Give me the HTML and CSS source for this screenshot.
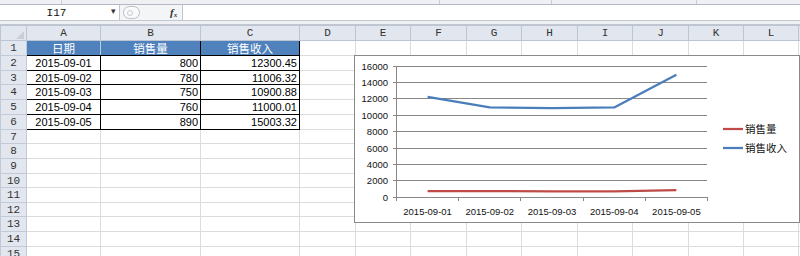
FILE: index.html
```html
<!DOCTYPE html>
<html lang="zh-CN">
<head>
    <meta charset="UTF-8">
    <title>销售数据</title>
    <link rel="stylesheet" href="styles.css">
</head>
<body>
    <div class="ribbon-edge">
        <span class="group" style="width: 62px"></span>
        <span class="group" style="width: 378px"></span>
        <span class="group" style="width: 112px"></span>
        <span class="group" style="width: 145px"></span>
    </div>

    <div class="formula-bar">
        <div class="name-box">
            <span class="cell-ref">I17</span>
            <span class="drop">&#9662;</span>
        </div>
        <div class="fx-tools">
            <span class="pill"><span class="dot"></span></span>
            <span class="fx">f<sub>x</sub></span>
        </div>
        <div class="formula-input"></div>
    </div>
    <div class="bar-gap"></div>

    <div class="sheet">
        <table class="grid">
            <colgroup>
                <col style="width: 26px">
                <col style="width: 74px">
                <col style="width: 100px">
                <col style="width: 99px">
                <col style="width: 56px">
                <col style="width: 55px">
                <col style="width: 56px">
                <col style="width: 55px">
                <col style="width: 56px">
                <col style="width: 55px">
                <col style="width: 56px">
                <col style="width: 55px">
                <col style="width: 55px">
                <col style="width: 40px">
            </colgroup>
            <thead>
                <tr>
                    <th class="corner"><span class="tri"></span></th>
                    <th>A</th><th>B</th><th>C</th><th>D</th><th>E</th><th>F</th>
                    <th>G</th><th>H</th><th>I</th><th>J</th><th>K</th><th>L</th><th></th>
                </tr>
            </thead>
            <tbody>
                <tr>
                    <th class="rh">1</th>
                    <td class="head first">日期</td>
                    <td class="head">销售量</td>
                    <td class="head">销售收入</td>
                    <td></td><td></td><td></td><td></td><td></td><td></td><td></td><td></td><td></td><td></td>
                </tr>
                <tr>
                    <th class="rh">2</th>
                    <td class="data date">2015-09-01</td>
                    <td class="data num">800</td>
                    <td class="data num">12300.45</td>
                    <td></td><td></td><td></td><td></td><td></td><td></td><td></td><td></td><td></td><td></td>
                </tr>
                <tr class="short">
                    <th class="rh">3</th>
                    <td class="data date">2015-09-02</td>
                    <td class="data num">780</td>
                    <td class="data num">11006.32</td>
                    <td></td><td></td><td></td><td></td><td></td><td></td><td></td><td></td><td></td><td></td>
                </tr>
                <tr>
                    <th class="rh">4</th>
                    <td class="data date">2015-09-03</td>
                    <td class="data num">750</td>
                    <td class="data num">10900.88</td>
                    <td></td><td></td><td></td><td></td><td></td><td></td><td></td><td></td><td></td><td></td>
                </tr>
                <tr>
                    <th class="rh">5</th>
                    <td class="data date">2015-09-04</td>
                    <td class="data num">760</td>
                    <td class="data num">11000.01</td>
                    <td></td><td></td><td></td><td></td><td></td><td></td><td></td><td></td><td></td><td></td>
                </tr>
                <tr>
                    <th class="rh">6</th>
                    <td class="data date">2015-09-05</td>
                    <td class="data num">890</td>
                    <td class="data num">15003.32</td>
                    <td></td><td></td><td></td><td></td><td></td><td></td><td></td><td></td><td></td><td></td>
                </tr>
            </tbody>
        </table>

        <div class="chart">
            <svg width="444" height="166" viewBox="355 56 444 166">
                <g class="gridlines">
                    <line x1="393" y1="66.5" x2="707" y2="66.5"/>
                    <line x1="393" y1="82.5" x2="707" y2="82.5"/>
                    <line x1="393" y1="98.5" x2="707" y2="98.5"/>
                    <line x1="393" y1="115.5" x2="707" y2="115.5"/>
                    <line x1="393" y1="131.5" x2="707" y2="131.5"/>
                    <line x1="393" y1="148.5" x2="707" y2="148.5"/>
                    <line x1="393" y1="164.5" x2="707" y2="164.5"/>
                    <line x1="393" y1="180.5" x2="707" y2="180.5"/>
                    <line x1="393" y1="197.5" x2="707" y2="197.5"/>
                    <line x1="396.5" y1="66" x2="396.5" y2="201"/>
                    <line x1="458.5" y1="197" x2="458.5" y2="201"/>
                    <line x1="520.5" y1="197" x2="520.5" y2="201"/>
                    <line x1="583.5" y1="197" x2="583.5" y2="201"/>
                    <line x1="645.5" y1="197" x2="645.5" y2="201"/>
                    <line x1="707.5" y1="197" x2="707.5" y2="201"/>
                </g>
                <g class="y-labels">
                    <text x="388" y="70">16000</text>
                    <text x="388" y="86">14000</text>
                    <text x="388" y="102">12000</text>
                    <text x="388" y="119">10000</text>
                    <text x="388" y="135">8000</text>
                    <text x="388" y="152">6000</text>
                    <text x="388" y="168">4000</text>
                    <text x="388" y="184">2000</text>
                    <text x="388" y="201">0</text>
                </g>
                <g class="x-labels">
                    <text x="427.6" y="215">2015-09-01</text>
                    <text x="489.8" y="215">2015-09-02</text>
                    <text x="552" y="215">2015-09-03</text>
                    <text x="614.2" y="215">2015-09-04</text>
                    <text x="676.4" y="215">2015-09-05</text>
                </g>
                <polyline class="series qty" points="427.6,191 489.8,191.1 552,191.4 614.2,191.3 676.4,190.2"/>
                <polyline class="series revenue" points="427.6,96.8 489.8,107.4 552,108.2 614.2,107.4 676.4,74.7"/>
                <g class="legend">
                    <line class="qty" x1="723" y1="129" x2="743" y2="129"/>
                    <text x="745" y="133">销售量</text>
                    <line class="revenue" x1="723" y1="148" x2="743" y2="148"/>
                    <text x="745" y="152">销售收入</text>
                </g>
            </svg>
        </div>
    </div>

    <script>
        // empty rows below the data
        const tbody = document.querySelector('.grid tbody');
        for (let r = 7; r <= 15; r++) {
            const tr = document.createElement('tr');
            if ([7, 10, 12].includes(r)) tr.className = 'short';
            tr.innerHTML = `<th class="rh">${r}</th>` + '<td></td>'.repeat(13);
            tbody.appendChild(tr);
        }
    </script>
</body>
</html>
```

FILE: styles.css
```css
* {
    box-sizing: border-box;
}
body {
    margin: 0;
    width: 800px;
    height: 256px;
    overflow: hidden;
    background: #fff;
    font-family: "Liberation Sans", "Noto Sans CJK SC", sans-serif;
}
.ribbon-edge {
    height: 5px;
    display: flex;
    background: #eef0f4;
    border-bottom: 1px solid #b3b9c3;
}
.ribbon-edge .group {
    border-right: 1px solid #c9ced6;
}
.formula-bar {
    height: 16px;
    display: flex;
    background: #fff;
    border-bottom: 1px solid #c2c7cf;
}
.name-box {
    width: 120px;
    display: flex;
    align-items: center;
    justify-content: center;
    position: relative;
    border-right: 1px solid #c2c7cf;
}
.cell-ref {
    font-family: "Liberation Mono", monospace;
    font-size: 11px;
    color: #111;
    margin-right: 6px;
}
.drop {
    position: absolute;
    right: 3px;
    top: 1px;
    font-size: 9px;
    color: #333;
}
.fx-tools {
    width: 62px;
    display: flex;
    align-items: center;
    padding-left: 3px;
    background: #f4f5f7;
}
.pill {
    width: 17px;
    height: 13px;
    border: 1px solid #b9bec6;
    border-radius: 7px;
    background: #fafafa;
    display: flex;
    align-items: center;
    padding-left: 3px;
}
.pill .dot {
    width: 6px;
    height: 6px;
    border: 1px solid #c7cbd2;
    border-radius: 50%;
}
.fx {
    margin-left: 30px;
    font-family: "Liberation Serif", serif;
    font-style: italic;
    font-weight: bold;
    font-size: 11px;
    color: #333;
}
.fx sub {
    font-size: 7px;
    vertical-align: -1px;
}
.formula-input {
    flex: 1;
    border-left: 1px solid #c2c7cf;
}
.bar-gap {
    height: 4px;
    background: #eef0f4;
    border-bottom: 1px solid #c2c7cf;
}
.sheet {
    position: relative;
}
.grid {
    table-layout: fixed;
    border-collapse: collapse;
    width: 838px;
}
.grid thead th {
    height: 12px;
    padding: 0;
    font-family: "Liberation Mono", monospace;
    font-weight: normal;
    font-size: 11px;
    line-height: 11px;
    color: #333;
    background: #e2e6ee;
    border: 1px solid #bcc5d3;
}
.grid thead th.corner {
    position: relative;
}
.tri {
    position: absolute;
    right: 2px;
    bottom: 1px;
    width: 0;
    height: 0;
    border-left: 8px solid transparent;
    border-bottom: 8px solid #c9ced8;
}
.grid tr {
    height: 15px;
}
.grid tr.short {
    height: 14px;
}
.grid td {
    padding: 0 2px;
    border: 1px solid #dcdcdc;
    font-size: 11px;
    line-height: 12px;
    white-space: nowrap;
    overflow: hidden;
}
.grid th.rh {
    padding: 0;
    font-family: "Liberation Mono", monospace;
    font-weight: normal;
    font-size: 11px;
    line-height: 12px;
    color: #333;
    background: #e2e6ee;
    border: 1px solid #c3cad7;
}
.grid td.head {
    background: #4f81bd;
    color: #fff;
    text-align: center;
    font-family: "Noto Sans CJK SC", sans-serif;
    font-size: 11.5px;
    border: 1px solid #000;
}
.grid td.head.first {
    border-right-color: #b9cbe3;
}
.grid td.data {
    border: 1px solid #000;
    color: #000;
}
.grid td.date {
    text-align: center;
}
.grid td.num {
    text-align: right;
}
.chart {
    position: absolute;
    left: 354px;
    top: 30px;
    width: 446px;
    height: 168px;
    border: 1px solid #8a8a8a;
    background: #fff;
}
.chart svg {
    display: block;
}
.gridlines line {
    stroke: #888;
    stroke-width: 1;
}
.y-labels text {
    font-family: "Liberation Sans", sans-serif;
    font-size: 9.5px;
    fill: #111;
    text-anchor: end;
}
.x-labels text {
    font-family: "Liberation Sans", sans-serif;
    font-size: 9.5px;
    fill: #111;
    text-anchor: middle;
}
.series {
    fill: none;
    stroke-width: 2.25;
    stroke-linejoin: round;
}
.qty {
    stroke: #be4b48;
    stroke-width: 2.25;
}
.revenue {
    stroke: #4a7ebb;
    stroke-width: 2.25;
}
.legend text {
    font-family: "Noto Sans CJK SC", sans-serif;
    font-size: 10.5px;
    fill: #111;
}
```
